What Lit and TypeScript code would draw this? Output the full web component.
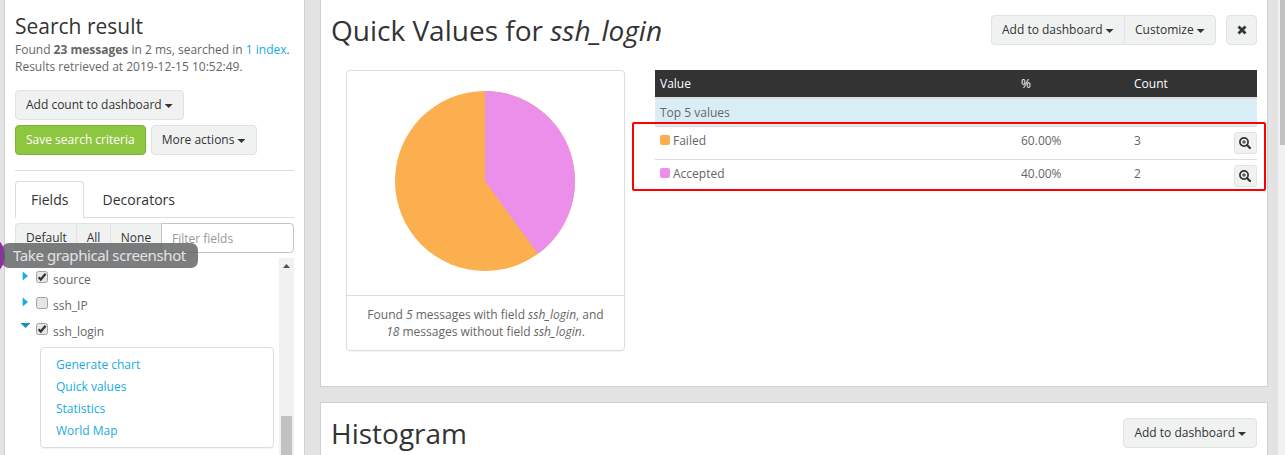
import { LitElement, html, css, svg } from "lit";
import { customElement } from "lit/decorators.js";
import { styleMap } from "lit/directives/style-map.js";

const rows = [
  { name: "Failed", percent: "60.00%", count: 3, color: "#fbaf4f" },
  { name: "Accepted", percent: "40.00%", count: 2, color: "#ec8fea" },
];
const fields = [
  { name: "source", checked: true, open: false },
  { name: "ssh_IP", checked: false, open: false },
  { name: "ssh_login", checked: true, open: true },
];
const actions = ["Generate chart", "Quick values", "Statistics", "World Map"];

@customElement("app-root")
export class AppRoot extends LitElement {
  static styles = css`
    * { box-sizing: border-box; }
    :host {
      box-sizing: border-box;
      display: flex; position: relative; width: 1285px; height: 455px; overflow: hidden;
      background: #e3e3e3; color: #666; font: 12px/17px "Open Sans", sans-serif;
      padding-left: 4px;
    }
    h1, h2, p { margin: 0; font-weight: 400; }
    .sidebar { width: 301px; height: 455px; overflow: hidden; background: #fff; border: solid #d1d1d1; border-width: 0 1px; padding: 12px 10px 0; display: flex; flex-direction: column; flex: none; }
    .sidebar h2 { font-size: 21px; line-height: 29px; color: #333; white-space: nowrap; }
    .summary { white-space: nowrap; }
    .link { color: #16ace3; }
    .btn { display: inline-flex; align-items: center; height: 30px; padding: 0 10px 1px; border: 1px solid #e1e3e3; border-radius: 4px; background: #f0f2f2; color: #333; white-space: nowrap; flex: none; }
    .btn.green { background: #8dc63f; border-color: #7eb138; color: #fff; }
    .btn.more { width: 106px; }
    .caret { width: 8px; height: 4px; margin-left: 3px; margin-top: 3px; background: #333; clip-path: polygon(0 0, 100% 0, 50% 100%); }
    .first { margin-top: 15px; align-self: flex-start; }
    .pair { display: flex; gap: 5px; margin-top: 5px; }
    .rule { height: 1px; background: #ddd; margin: 15px 0 10px; flex: none; }
    .tabs { display: flex; height: 37px; border-bottom: 1px solid #ddd; font-size: 14px; color: #333; flex: none; }
    .tab { height: 37px; padding: 0 18px 0 18.5px; line-height: 38px; }
    .tab.active { width: 69px; padding: 0 15px; background: #fff; border: 1px solid #ddd; border-bottom: 0; border-radius: 4px 4px 0 0; line-height: 36px; }
    .filter { display: flex; margin-top: 5px; height: 30px; flex: none; }
    .filter .btn { border-radius: 0; border-right: 0; padding: 0 0 1px; justify-content: center; }
    .filter .btn:first-child { border-radius: 4px 0 0 4px; width: 61px; padding-left: 1px; }
    .filter .btn:nth-child(2) { width: 34px; }
    .filter .btn:nth-child(3) { width: 51px; }
    .input { flex: 1; border: 1px solid #c4c4c4; border-radius: 0 4px 4px 0; color: #999; padding: 0 10px; line-height: 29px; background: #fff; }
    .list { display: flex; margin-top: 5px; height: 197px; overflow: hidden; flex: none; }
    .items { flex: 1; padding: 9px 5px 0; }
    .field { display: flex; height: 26px; align-items: flex-start; }
    .field svg { flex: none; }
    .arrow { width: 16px; height: 16px; }
    .check { width: 12px; height: 12px; margin-top: 4px; }
    .field span { margin: 4px 0 0 5px; }
    .menu { width: 234px; height: 101px; border: 1px solid #ddd; border-radius: 4px; margin: 2px 0 0 20px; padding: 6px 15px; line-height: 22px; box-shadow: 0 1px 1px rgba(0,0,0,.05); }
    .track { width: 15px; background: #f1f1f1; display: flex; flex-direction: column; align-items: center; justify-content: space-between; padding-top: 6px; }
    .up { width: 7px; height: 4px; background: #505050; clip-path: polygon(50% 0, 100% 100%, 0 100%); }
    .thumb { width: 11px; height: 39px; background: #c1c1c1; }
    main { margin-left: 15px; width: 948px; flex: none; display: flex; flex-direction: column; gap: 15px; }
    .panel { background: #fff; border: 1px solid #d1d1d1; padding: 15px 10px 0; }
    .panel.top { height: 387px; border-top: 0; flex: none; }
    .panel.bottom { flex: 1; }
    .head { display: flex; justify-content: space-between; align-items: flex-start; height: 55px; }
    .head h1 { font-size: 28px; line-height: 30px; color: #333; white-space: nowrap; }
    .tools { display: flex; }
    .tools .l { border-radius: 4px 0 0 4px; width: 133px; }
    .tools .r { border-radius: 0 4px 4px 0; width: 92px; }
    .tools .close { margin-left: 10px; width: 31px; padding: 0; justify-content: center; }
    .tools .l { border-right: 0; }
    .content { display: flex; padding-left: 15px; gap: 30px; align-items: flex-start; }
    .card { width: 279px; height: 281px; border: 1px solid #ddd; border-radius: 4px; box-shadow: 0 1px 1px rgba(0,0,0,.05); flex: none; text-align: center; }
    .pie { display: block; margin: 20px auto 24px 48px; }
    .card p { border-top: 1px solid #ddd; padding-top: 10px; white-space: nowrap; }
    .table { width: 602px; }
    .tr { display: grid; grid-template-columns: 361px 113px 60px 1fr; padding-left: 5px; height: 33px; border-top: 1px solid #ddd; padding-top: 5px; }
    .tr.th { height: 27px; background: #333; color: #fff; border: 0; }
    .sub { height: 29px; border-top: 2px solid #ddd; background: #d9edf7; padding: 5px 5px 0; }
    .val { display: flex; }
    .swatch { width: 10px; height: 10px; border-radius: 2px; margin: 3px 3px 0 0; }
    .zoom { width: 23px; height: 22px; border: 1px solid #e1e3e3; border-radius: 3px; background: #f0f2f2; display: flex; align-items: center; padding-left: 4px; justify-self: end; }
    .highlight { position: absolute; left: 632px; top: 122px; width: 634px; height: 69px; border: 2px solid #f00; border-radius: 2px; }
    .scroll { position: absolute; right: 0; top: 0; width: 7px; height: 455px; background: #f1f1f1; }
    .scroll div { margin-left: 2px; height: 145px; background: #c1c1c1; }
    .orb { position: absolute; left: -38px; top: 234px; width: 43px; height: 43px; border-radius: 50%; background: #9a26b4; }
    .tip { position: absolute; left: 2px; top: 243px; width: 196px; height: 25px; border-radius: 7px; background: rgba(90,93,94,.8); color: #e3e3e3; font: 15px/25px "Noto Sans", "Open Sans", sans-serif; letter-spacing: -.39px; padding-left: 11px; white-space: nowrap; }
  `;

  private check(on: boolean) {
    return svg`<svg class="check" viewBox="0 0 12 12"><rect x=".5" y=".5" width="11" height="11" rx="2" fill="#e6e6e6" stroke="#a2a2a2"/>${on ? svg`<path d="M2.600 6.200 4.800 8.500 9.600 2.800" fill="none" stroke="#333" stroke-width="2.200"/>` : ""}</svg>`;
  }

  render() {
    const caret = html`<i class="caret"></i>`;
    return html`
      <section class="sidebar">
        <h2>Search result</h2>
        <p class="summary">Found <b>23 messages</b> in 2 ms, searched in <span class="link">1 index</span>.<br>Results retrieved at 2019-12-15 10:52:49.</p>
        <div class="btn first">Add count to dashboard${caret}</div>
        <div class="pair"><div class="btn green">Save search criteria</div><div class="btn more">More actions${caret}</div></div>
        <div class="rule"></div>
        <div class="tabs"><div class="tab active">Fields</div><div class="tab">Decorators</div></div>
        <div class="filter"><div class="btn">Default</div><div class="btn">All</div><div class="btn">None</div><div class="input">Filter fields</div></div>
        <div class="list">
          <div class="items">
            ${fields.map(f => html`<div class="field">
              <svg class="arrow" viewBox="0 0 16 16">${f.open ? svg`<path d="M1 4h9v.5L5.500 9 1 4.500z" fill="#1490bf"/>` : svg`<path d="M2.700 4.500v9l5.300-4.500z" fill="#16ace3"/>`}</svg>
              ${this.check(f.checked)}<span>${f.name}</span></div>`)}
            <div class="menu">${actions.map(a => html`<div class="link">${a}</div>`)}</div>
          </div>
          <div class="track"><div class="up"></div><div class="thumb"></div></div>
        </div>
      </section>
      <main>
        <section class="panel top">
          <div class="head"><h1>Quick Values for <em>ssh_login</em></h1>
            <div class="tools"><div class="btn l">Add to dashboard${caret}</div><div class="btn r">Customize${caret}</div>
              <div class="btn close"><svg width="10" height="10" viewBox="0 0 10 10"><path d="M1.500 1.500l7 7M8.500 1.500l-7 7" stroke="#333" stroke-width="2.800"/></svg></div></div>
          </div>
          <div class="content">
            <div class="card">
              <svg class="pie" width="180" height="180" viewBox="-90 -90 180 180"><circle r="90" fill="#fbaf4f"/><path d="M0 0V-90A90 90 0 0 1 52.900 72.810Z" fill="#ec8fea"/></svg>
              <p>Found <em>5</em> messages with field <em>ssh_login</em>, and<br><em>18</em> messages without field <em>ssh_login</em>.</p>
            </div>
            <div class="table">
              <div class="tr th"><span>Value</span><span>%</span><span>Count</span></div>
              <div class="sub">Top 5 values</div>
              ${rows.map(r => html`<div class="tr"><div class="val"><i class="swatch" style=${styleMap({ background: r.color })}></i>${r.name}</div><span>${r.percent}</span><span>${r.count}</span>
                <div class="zoom"><svg width="12" height="12" viewBox="0 0 12 12" fill="none" stroke="#333"><circle cx="5" cy="5" r="4.100" stroke-width="1.700"/><path d="M8 8l3 3" stroke-width="2.200" stroke-linecap="round"/><path d="M5 3v4M3 5h4"/></svg></div></div>`)}
            </div>
          </div>
        </section>
        <section class="panel bottom"><div class="head"><h1>Histogram</h1><div class="tools"><div class="btn">Add to dashboard${caret}</div></div></div></section>
      </main>
      <div class="highlight"></div>
      <div class="scroll"><div></div></div>
      <div class="orb"></div>
      <div class="tip">Take graphical screenshot</div>`;
  }
}
